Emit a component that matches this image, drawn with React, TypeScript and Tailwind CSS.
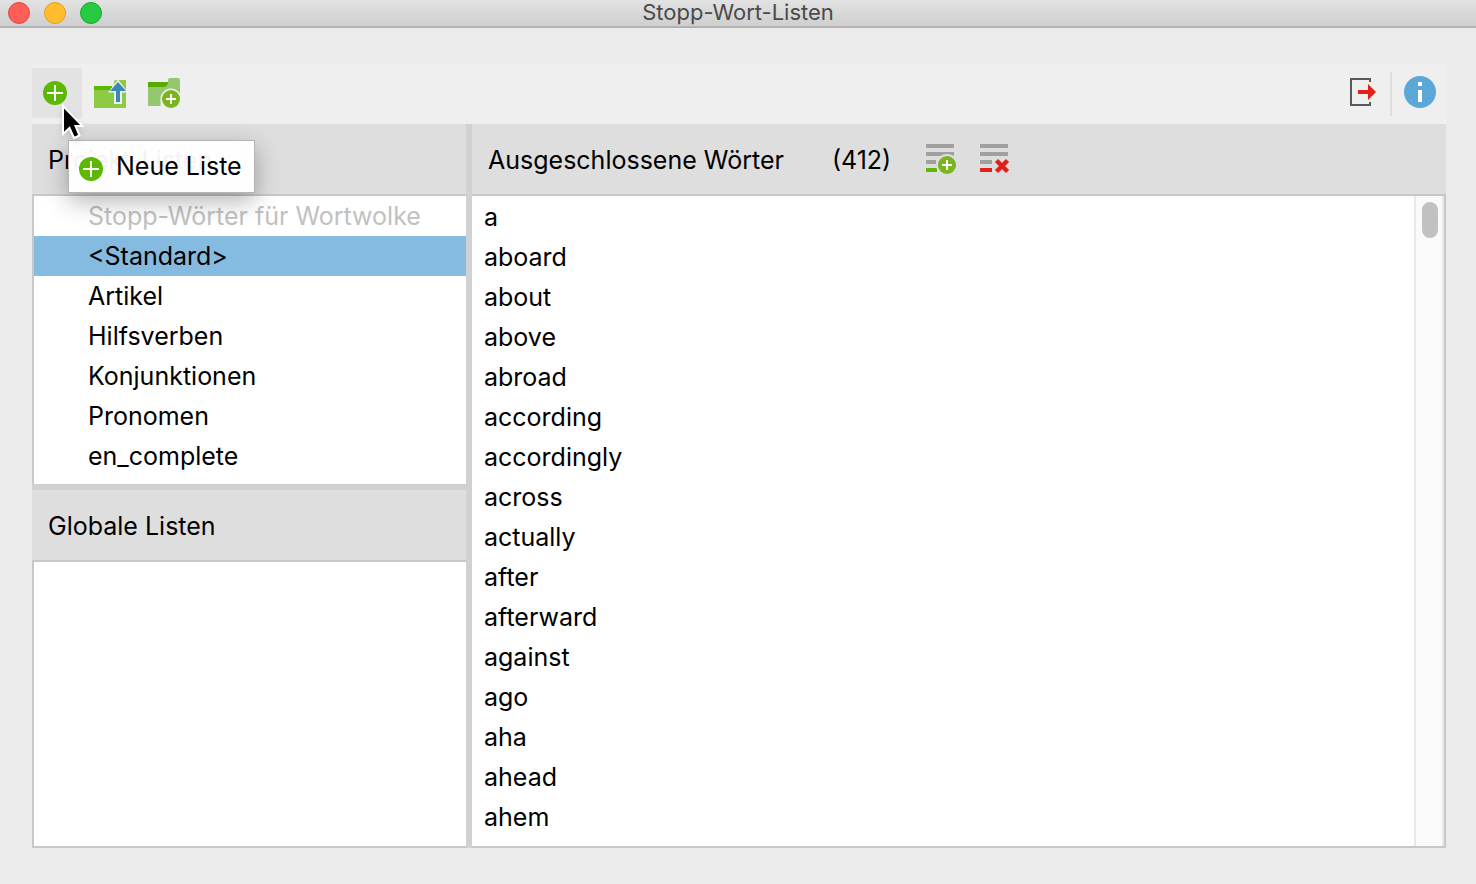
import { useState } from "react";

const projectLists = ["<Standard>", "Artikel", "Hilfsverben", "Konjunktionen", "Pronomen", "en_complete"];

const words = [
  "a", "aboard", "about", "above", "abroad", "according", "accordingly", "across",
  "actually", "after", "afterward", "against", "ago", "aha", "ahead", "ahem",
];

function PlusCircle() {
  return (
    <svg width="24" height="24" viewBox="0 0 24 24" aria-hidden="true" className="shrink-0">
      <circle cx="12" cy="12" r="12" fill="#5cb800" />
      <path d="M4 12H20M12 4V20" stroke="#fff" strokeWidth="2" />
    </svg>
  );
}

function ImportFolder() {
  return (
    <svg width="34" height="30" viewBox="0 0 34 30" aria-hidden="true">
      <path d="M0 8H18V14H0Z" fill="#5cb800" />
      <path d="M20 4Q20 2 22 2H32V30H0V12H18L20 9Z" fill="#8dcb47" />
      <path d="M24 1.5L34 14.5H28V26H20V14.5H14Z" fill="#efefef" />
      <path d="M24 4L32 13H26V24H22V13H16Z" fill="#3b89b7" />
    </svg>
  );
}

function NewFolder() {
  return (
    <svg width="32" height="32" viewBox="0 0 32 32" aria-hidden="true">
      <path d="M0 5H20V10H0Z" fill="#55ab00" />
      <path d="M20 3Q20 1 22 1H30Q32 1 32 3V29H0V10H15Q20 10 20 5Z" fill="#93c86f" />
      <path d="M12.500 29V22A10.500 10.500 0 0 1 32 16.500V32H13Z" fill="#efefef" />
      <circle cx="23" cy="22" r="9" fill="#7ab51d" />
      <path d="M18 22H28M23 17V27" stroke="#fff" strokeWidth="2" />
    </svg>
  );
}

function ExitIcon() {
  return (
    <svg width="28" height="28" viewBox="0 0 28 28" aria-hidden="true">
      <path d="M20 4V1H1V27H20V24" fill="none" stroke="#5a5a5c" strokeWidth="2" />
      <path d="M8 12H18V6L26 14L18 22V16H8Z" fill="#e32017" />
    </svg>
  );
}

function InfoIcon() {
  return (
    <svg width="32" height="32" viewBox="0 0 32 32" aria-hidden="true">
      <circle cx="16" cy="16" r="16" fill="#5aa7d8" />
      <path d="M14 6H18V10H14ZM14 14H18V26H14Z" fill="#fff" />
    </svg>
  );
}

function AddWordIcon() {
  return (
    <svg width="30" height="30" viewBox="0 0 30 30" aria-hidden="true">
      <path d="M0 0H28V4H0ZM0 8H28V12H0ZM0 16H10V20H0Z" fill="#a0a0a0" />
      <path d="M0 24H11V28H0Z" fill="#5cb800" />
      <circle cx="21" cy="21" r="11" fill="#dedede" />
      <circle cx="21" cy="21" r="9" fill="#7ab51d" />
      <path d="M16 21H26M21 16V26" stroke="#fff" strokeWidth="2" />
    </svg>
  );
}

function RemoveWordIcon() {
  return (
    <svg width="30" height="30" viewBox="0 0 30 30" aria-hidden="true">
      <path d="M0 0H28V4H0ZM0 8H28V12H0ZM0 16H12V20H0Z" fill="#a0a0a0" />
      <path d="M0 24H12V28H0Z" fill="#e32017" />
      <path d="M16.5 16.5L27.5 27.5M27.5 16.5L16.5 27.5" stroke="#e32017" strokeWidth="4.500" />
    </svg>
  );
}

function Pointer() {
  return (
    <svg width="24" height="36" viewBox="0 0 24 36" aria-hidden="true" className="drop-shadow-md">
      <path d="M1 2V30L7.500 24L12 34L17.500 31.500L13.500 22H20.500Z" fill="#000" stroke="#fff" strokeWidth="2" />
    </svg>
  );
}

export default function App() {
  const [selected, setSelected] = useState("<Standard>");

  return (
    <div className="flex min-h-screen flex-col bg-[#ebebeb] font-['Inter','Liberation_Sans',sans-serif] text-[25px] text-black">
      <header className="grid h-7 grid-cols-[1fr_auto_1fr] items-center border-b-2 border-[#b1b1b1] bg-linear-to-b from-[#e2e2e2] to-[#cfcfcf] px-2">
        <div className="flex gap-3.5">
          <button aria-label="Schließen" className="size-[22px] rounded-full border border-[#e2463f] bg-[#ff5f57]" />
          <button aria-label="Minimieren" className="size-[22px] rounded-full border border-[#e1a116] bg-[#ffbd2e]" />
          <button aria-label="Maximieren" className="size-[22px] rounded-full border border-[#12ac28] bg-[#28ca41]" />
        </div>
        <h1 className="pb-0.5 text-[22px] leading-6 text-[#4a4a4a]">Stopp-Wort-Listen</h1>
      </header>

      <main className="flex grow flex-col pt-9 pr-[30px] pb-9 pl-8">
        <div className="flex h-[60px] items-center bg-[#efefef] pb-0.5">
          <div className="relative">
            <button aria-label="Neue Liste" aria-describedby="tip" className="flex h-[50px] w-[50px] items-center bg-[#e3e3e3] pl-[11px]">
              <PlusCircle />
            </button>
            <div id="tip" role="tooltip" className="absolute top-[72px] left-9 z-10 flex h-[53px] items-center gap-[13px] border border-[#b4b4b4] bg-white/95 pr-3 pl-2.5 whitespace-nowrap shadow-[0_8px_24px_rgba(0,0,0,0.3)]">
              <div className="pt-1">
                <PlusCircle />
              </div>
              <span>Neue Liste</span>
            </div>
            <div className="absolute top-9 left-[30px] z-20">
              <Pointer />
            </div>
          </div>
          <button aria-label="Liste importieren" className="ml-3">
            <ImportFolder />
          </button>
          <button aria-label="Neuer Ordner" className="ml-5">
            <NewFolder />
          </button>
          <button aria-label="Fenster schließen" className="mr-3 ml-auto pb-0.5">
            <ExitIcon />
          </button>
          <div className="mt-0.5 mr-3 h-11 w-0.5 bg-[#dedede]" />
          <button aria-label="Information" className="mr-2.5 pb-0.5">
            <InfoIcon />
          </button>
        </div>

        <div className="flex grow">
          <div className="flex w-[434px] shrink-0 flex-col">
            <h2 className="flex h-[72px] items-center border-b-2 border-[#c8c8c8] bg-[#dedede] pt-1 pl-4">Projekt-Listen</h2>
            <div className="border-l-2 border-[#c8c8c8] bg-white pb-2">
              <p className="pl-[54px] leading-10 text-[#c1c1c1]">Stopp-Wörter für Wortwolke</p>
              <ul>
                {projectLists.map((name) => (
                  <li key={name}>
                    <button
                      onClick={() => setSelected(name)}
                      aria-pressed={selected === name}
                      className={`block w-full pl-[54px] text-left leading-10 ${selected === name ? "bg-[#85bbe0]" : "bg-white"}`}
                    >
                      {name}
                    </button>
                  </li>
                ))}
              </ul>
            </div>
            <div className="h-1.5 bg-[#d1d1d1]" />
            <h2 className="flex h-[72px] items-center border-b-2 border-[#c8c8c8] bg-[#dedede] pt-1 pl-4">Globale Listen</h2>
            <div className="grow border-b-2 border-l-2 border-[#c8c8c8] bg-white" />
          </div>

          <div className="w-1.5 shrink-0 bg-[#d1d1d1]" />

          <section className="flex grow flex-col">
            <div className="flex h-[72px] items-center border-b-2 border-[#c8c8c8] bg-[#dedede] pl-4">
              <h2 className="pt-1">Ausgeschlossene Wörter</h2>
              <span className="ml-12 pt-1">(412)</span>
              <button aria-label="Wort hinzufügen" className="ml-[35px]">
                <AddWordIcon />
              </button>
              <button aria-label="Wort entfernen" className="ml-6">
                <RemoveWordIcon />
              </button>
            </div>
            <div className="flex grow border-r-2 border-b-2 border-[#c8c8c8] bg-white">
              <ul className="grow pt-px pl-3">
                {words.map((word) => (
                  <li key={word} className="leading-10">
                    {word}
                  </li>
                ))}
              </ul>
              <div className="w-[30px] border-x-2 border-[#e8e8e8] bg-[#fafafa] px-1.5 pt-1.5">
                <div className="h-9 w-4 rounded-full bg-[#c1c1c1]" />
              </div>
            </div>
          </section>
        </div>
      </main>
    </div>
  );
}
